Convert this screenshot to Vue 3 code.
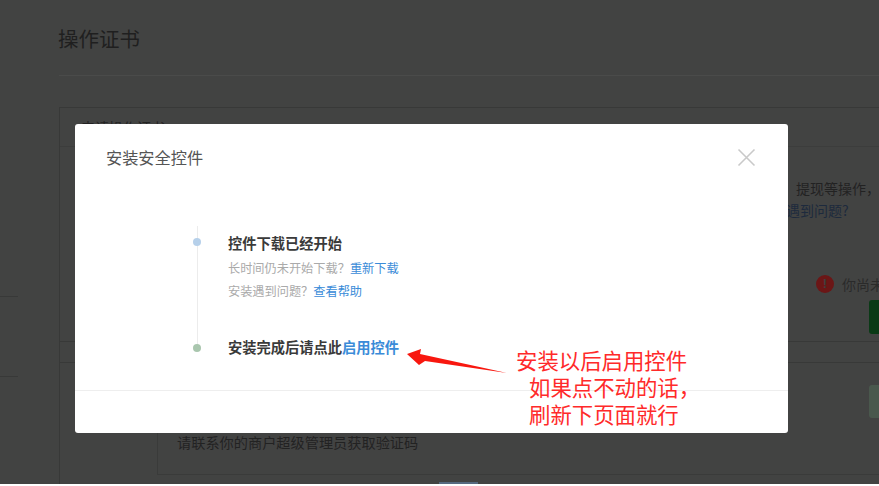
<template>
  <div class="screen">
    <div class="page">
      <h1 class="page-title">操作证书</h1>
      <div class="rule"></div>
      <section class="card">
        <div class="card-head">申请操作证书</div>
        <div class="notice">
          <p>提现等操作，</p>
          <p class="dim-link">遇到问题?</p>
        </div>
        <div class="status">
          <span class="alert">!</span>
          <span>你尚未</span>
        </div>
        <div class="btn-row"><span class="btn"></span></div>
        <div class="sep"></div>
        <div class="verify">
          <div class="btn-row"><span class="btn pale"></span></div>
          <div class="verify-box">请联系你的商户超级管理员获取验证码</div>
        </div>
      </section>
      <div class="strip"><span class="tab"></span></div>
    </div>
    <div class="side-lines"><i></i><i></i></div>

    <div class="modal">
      <header class="modal-head">
        <span>安装安全控件</span>
        <svg class="close" width="19" height="19" viewBox="0 0 19 19">
          <path d="M1.500 1.500 17.500 17.500M17.500 1.500 1.500 17.500" stroke="#c9c9c9" stroke-width="1.600" fill="none" />
        </svg>
      </header>
      <div class="steps">
        <div class="step first">
          <span class="dot blue"></span>
          <h3>控件下载已经开始</h3>
          <p class="lead">长时间仍未开始下载？<a>重新下载</a></p>
          <p>安装遇到问题？<a>查看帮助</a></p>
        </div>
        <div class="step">
          <span class="dot green"></span>
          <h3>安装完成后请点此<a>启用控件</a></h3>
        </div>
      </div>
      <div class="modal-foot"></div>
    </div>

    <svg class="arrow" width="104" height="25" viewBox="0 0 104 25">
      <path d="M1 5 15 0 14 5 101 24 19 12 13 16Z" fill="#f8170f" />
    </svg>
    <div class="note">
      <p>安装以后启用控件</p>
      <p class="in">如果点不动的话，</p>
      <p class="in">刷新下页面就行</p>
    </div>
  </div>
</template>

<script setup>
</script>

<style>
html, body { margin: 0; background: #424342; }
</style>

<style scoped>
* { box-sizing: border-box; }
p, h1, h3 { margin: 0; font-weight: normal; }
.screen {
  position: relative;
  width: 879px;
  height: 486px;
  overflow: hidden;
  background: #424342;
  font-family: "Noto Sans CJK SC", "Liberation Sans", sans-serif;
}
.page { height: 486px; padding-left: 59px; display: flex; flex-direction: column; }
.page-title { height: 75px; flex: none; margin-left: -1px; padding-top: 23px; font-size: 20.500px; line-height: 30px; color: #1f1f1f; }
.rule { height: 1px; background: #4a4b4a; flex: none; }
.card {
  margin-top: 31px;
  height: 377px;
  flex: none;
  border-left: 1px solid #383938;
  border-top: 1px solid #383938;
  display: flex;
  flex-direction: column;
  width: 830px;
}
.card-head {
  height: 39px;
  padding: 9px 0 0 21px;
  font-size: 14px;
  line-height: 20px;
  color: #222;
  border-bottom: 1px solid #3c3d3c;
  flex: none;
}
.notice { height: 121px; padding: 30px 0 0 736px; font-size: 14px; line-height: 22px; color: #222; flex: none; white-space: nowrap; }
.dim-link { color: #1d2a3d; margin-left: -10px; }
.status { height: 32px; padding-left: 756px; display: flex; align-items: center; gap: 8px; font-size: 14px; color: #2a2a2a; white-space: nowrap; flex: none; overflow: hidden; }
.alert {
  width: 18px; height: 18px; border-radius: 50%; flex: none;
  background: #6b1616; color: #3f3f3f;
  font: bold 13px/18px "Liberation Sans", sans-serif; text-align: center;
}
.btn-row { padding-left: 809px; flex: none; }
.btn { display: block; width: 30px; height: 34px; border-radius: 3px; background: #0a3a16; }
.btn.pale { height: 33px; background: #4a584d; }
.sep { height: 8px; border-bottom: 1px solid #383938; flex: none; }
.verify { flex: 1; border-top: 1px solid #383938; margin-top: 20px; padding-top: 22px; display: flex; flex-direction: column; }
.verify-box {
  margin-left: 97px;
  flex: 1;
  margin-bottom: 9px;
  border-left: 1px solid #3a3b3a;
  border-bottom: 1px solid #3a3b3a;
  padding: 14px 0 0 19px;
  font-size: 14.200px;
  line-height: 20px;
  color: #222;
}
.strip { height: 2px; margin-left: -59px; background: #fff; flex: none; position: relative; }
.tab { position: absolute; left: 439px; top: -2px; width: 39px; height: 2px; background: #56697f; }
.side-lines { position: absolute; left: 0; top: 296px; width: 18px; height: 81px; display: flex; flex-direction: column; justify-content: space-between; }
.side-lines i { display: block; height: 1px; background: #383938; }

.modal {
  position: absolute;
  left: 75px; top: 124px;
  width: 713px; height: 309px;
  background: #fff;
  border-radius: 3px;
  display: flex;
  flex-direction: column;
}
.modal-head {
  height: 66px; flex: none;
  padding: 24px 32px 0 32px;
  display: flex; justify-content: space-between; align-items: flex-start;
  font-size: 16.200px; line-height: 20px; color: #555;
}
.modal-head span { margin-top: -1px; margin-left: -1px; }
.steps {
  flex: 1;
  margin-left: 122px;
  padding: 40px 0 0 0;
  position: relative;
}
.steps::before {
  content: ""; position: absolute; left: 0; top: 36px; width: 1px; height: 122px; background: #ececec;
}
.step { position: relative; padding-left: 31px; }
.first { height: 104px; }
.dot { position: absolute; left: -4px; width: 8px; height: 8px; border-radius: 50%; }
.blue { top: 8px; background: #b6d0ea; }
.green { top: 10px; background: #a9c6ae; }
h3 { font-size: 14.250px; font-weight: 700; line-height: 26px; color: #3a3a3a; white-space: nowrap; }
.step p { font-size: 12.200px; line-height: 23px; color: #aaa; white-space: nowrap; }
.step .lead { margin-top: 1px; }
.step a { color: #3a8bd8; }
.modal-foot { height: 43px; flex: none; border-top: 1px solid #eee; }

.arrow { position: absolute; left: 406px; top: 349px; }
.note {
  position: absolute;
  left: 516px; top: 346px;
  color: #ff2a2a;
  font-size: 21.400px;
  line-height: 27px;
  white-space: nowrap;
}
.note .in { padding-left: 13px; }
</style>
